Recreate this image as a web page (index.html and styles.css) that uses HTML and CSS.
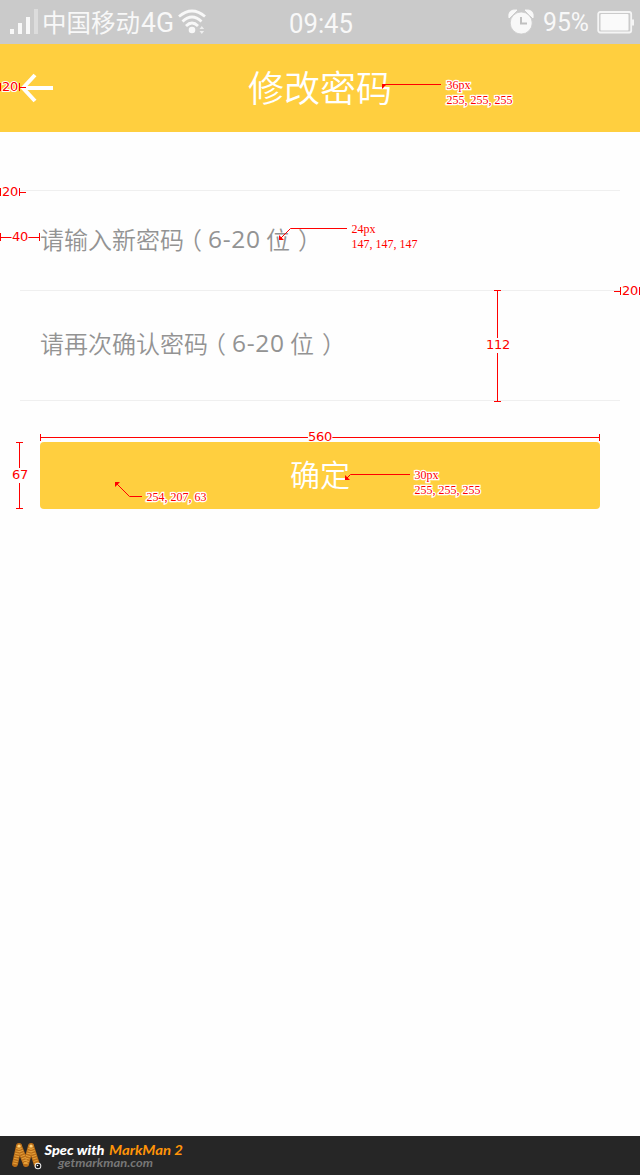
FILE: index.html
```html
<!DOCTYPE html>
<html lang="zh-CN">
<head>
<meta charset="utf-8">
<title>修改密码</title>
<link rel="stylesheet" href="styles.css">
</head>
<body>
<div class="screen">
  <div class="status">
    <div class="carrier">
      <svg class="signal" width="31" height="26" viewBox="0 0 31 26"><path d="M1 20h4v5H1zM9 14h4v11H9zM17 8h4v17h-4z" fill="#f8f8f8"/><path d="M25 0h4v25h-4z" fill="#dcdcdc"/></svg>
      <span class="operator">中国移动</span>
      <svg class="net" width="35" height="36" viewBox="0 0 35 36"><text x="0" y="28" textLength="33" lengthAdjust="spacingAndGlyphs">4G</text></svg>
      <svg class="wifi" width="28" height="26" viewBox="0 0 28 26"><g fill="none" stroke="#f8f8f8" stroke-width="2.8"><path d="M1 7.500Q14-3.500 27 7.500"/><path d="M4.500 12.500Q14 3.500 23.500 12.500"/><path d="M8 17Q14 11 20 17"/></g><circle cx="14" cy="21" r="3.300" fill="#f8f8f8"/><path d="M21.500 20l2.300-3 2.300 3zm0 2l2.300 3 2.300-3z" fill="#eee"/></svg>
    </div>
    <svg class="clock" width="66" height="38" viewBox="0 0 66 38"><text x="0" y="28" textLength="64" lengthAdjust="spacingAndGlyphs">09:45</text></svg>
    <div class="power">
      <svg class="alarm" width="26" height="26" viewBox="0 0 26 26"><path d="M1 9Q-.5 0 9 1zM25 9Q26.500 0 17 1z" fill="#f8f8f8" stroke="#f8f8f8" stroke-linejoin="round"/><circle cx="13.200" cy="14" r="11" fill="#f8f8f8" stroke="#cacaca" stroke-width=".8"/><path d="M13 8v6.500h6" fill="none" stroke="#c0c0c0" stroke-width="2"/></svg>
      <svg class="percent" width="48" height="36" viewBox="0 0 48 36"><text x="0" y="27" textLength="46" lengthAdjust="spacingAndGlyphs">95%</text></svg>
      <svg class="battery" width="37" height="24" viewBox="0 0 37 24"><rect x="1.200" y="2" width="33" height="20.500" rx="2" fill="#cbcbcb" stroke="#f5f5f5" stroke-width="1.800"/><rect x="3.500" y="4" width="28" height="16.500" rx="1" fill="#fafafa"/><path d="M35 9.500h2v6h-2z" fill="#f5f5f5"/></svg>
    </div>
  </div>
  <header class="navbar">
    <svg class="back" width="33" height="30" viewBox="0 0 33 30"><path d="M15 2L3 15l12 13M3 15h30" fill="none" stroke="#fff" stroke-width="4"/></svg>
    <h1 class="title">修改密码</h1>
  </header>
  <main class="form">
    <div class="field first">请输入新密码<span class="open">（</span><span class="range">6-20</span><span class="unit">位</span><span class="close">）</span></div>
    <div class="field second">请再次确认密码<span class="open">（</span><span class="range">6-20</span><span class="unit">位</span><span class="close">）</span></div>
    <button class="submit">确定</button>
  </main>
  <footer class="credit">
    <svg class="logo" width="32" height="28" viewBox="0 0 32 28"><g fill="none" stroke-linecap="round" stroke-width="6"><path d="M8 4L4 22M8 4l7 18M20 4l-5 18M20 4l6 19" stroke="#b96d18"/><path d="M8 4L4 22M8 4l7 18M20 4l-5 18M20 4l6 19" stroke="#e5a13a" stroke-width="4.500" stroke-dasharray="1 1.500" stroke-linecap="butt"/></g><circle cx="8" cy="4" r="1.500" fill="#ffd37a"/><circle cx="20" cy="4" r="1.500" fill="#ffd37a"/><circle cx="27" cy="24" r="3.300" fill="#eee"/><circle cx="27" cy="24" r="2.300" fill="#111"/><circle cx="26.500" cy="23.500" r=".8" fill="#fff"/></svg>
    <div class="brand">
      <svg width="150" height="36" viewBox="0 0 150 36"><text class="spec" x="1.500" y="18.500" textLength="60" lengthAdjust="spacingAndGlyphs">Spec with</text><text class="spec product" x="66" y="18.500" textLength="74" lengthAdjust="spacingAndGlyphs">MarkMan 2</text><text class="site" x="15" y="30.500" textLength="95" lengthAdjust="spacingAndGlyphs">getmarkman.com</text></svg>
    </div>
  </footer>
  <svg class="marks" width="640" height="1175" viewBox="0 0 640 1175">
    <g class="rules">
      <path d="M.5 83v8M19.500 83v8M19 87.500h7"/>
      <path d="M.5 188v8M19.500 188v8M19 192.500h7"/>
      <path d="M.5 233v8M0 237.500h12M28 237.500h12M39.500 233v8"/>
      <path d="M614 291.500h6M620.500 287v8M639.500 287v8"/>
      <path d="M494 290.500h7M497.500 290v48M497.500 353v48M494 401.500h7"/>
      <path d="M40.500 434v7M40 437.500h268M332 437.500h267M599.500 434v7"/>
      <path d="M16 442.500h7M19.500 442v26M19.500 483v25M16 508.500h7"/>
      <path d="M384 84.500h57M281 238l9.500-9.500H347M347 478l3.500-3.500H410M117 484l12.500 12.500H142"/>
    </g>
    <path class="tips" d="M382 84h5l-5 5zM279 235v5h5zM345 475v5h5zM115 482h5l-5 5z"/>
    <g class="sizes">
      <text x="10" y="91">20</text><text x="10" y="196">20</text><text x="20" y="241">40</text>
      <text x="630" y="295">20</text><text x="498" y="349">112</text><text x="320" y="441">560</text><text x="20" y="479">67</text>
    </g>
    <g class="notes">
      <text x="446.5" y="89">36px</text><text x="446.5" y="104">255, 255, 255</text>
      <text x="351.5" y="233">24px</text><text x="351.5" y="248">147, 147, 147</text>
      <text x="414.5" y="479">30px</text><text x="414.5" y="494">255, 255, 255</text>
      <text x="146.5" y="501">254, 207, 63</text>
    </g>
  </svg>
</div>
</body>
</html>
```
FILE: styles.css
```css
* { box-sizing: border-box; }
body { margin: 0; font-family: "Noto Sans CJK SC", sans-serif; }
.screen { position: relative; width: 640px; height: 1175px; display: flex; flex-direction: column; background: #fefefe; overflow: hidden; }
.status { display: grid; grid-template-columns: 1fr auto 1fr; align-items: start; height: 44px; padding: 0 6px 0 9px; background: #cacaca; color: #f8f8f8; fill: #f8f8f8; white-space: nowrap; }
.carrier, .power { display: flex; align-items: center; height: 43px; }
.operator { margin-left: 2px; font-size: 24.5px; font-weight: 400; line-height: 43px; }
.net { margin: 0 2px 0 1px; font: 400 28px Roboto, sans-serif; }
.clock { margin-top: 5px; font: 400 28px Roboto, sans-serif; }
.power { justify-content: flex-end; }
.percent { margin: 0 6px 0 9px; font: 400 26px Roboto, sans-serif; }
.navbar { display: grid; grid-template-columns: 33px 1fr 33px; align-items: center; height: 88px; padding: 0 20px; background: #ffcf3f; }
.title { margin: 0; font-size: 36px; font-weight: 350; line-height: 84px; height: 88px; text-align: center; color: #fff; }
.form { display: flex; flex-direction: column; padding: 58px 20px 0; }
.field { display: flex; padding-left: 20px; border-top: 1px solid #efefef; font-size: 24px; font-weight: 350; color: #939393; white-space: nowrap; }
.first { height: 100px; line-height: 95px; }
.second { height: 111px; line-height: 103px; border-bottom: 1px solid #efefef; }
.open, .close { width: 12px; font-feature-settings: "halt"; }
.open { margin: 0 6px 0 6px; }
.close { margin-left: 8px; }
.range { width: 58px; font-family: "Open Sans", sans-serif; font-size: 24.5px; font-weight: 400; letter-spacing: 0.7px; }
.submit { margin: 41px 20px 0; height: 67px; padding: 0 0 4px; border: 0; border-radius: 4px; background: #ffcf3f; color: #fff; font: 350 30px/63px "Noto Sans CJK SC", sans-serif; }
.credit { display: flex; align-items: center; height: 39px; margin-top: auto; padding-left: 11px; background: #262626; }
.brand { display: flex; height: 36px; margin-bottom: 3px; }
.spec { font: italic 900 13px Lato, sans-serif; fill: #fff; }
.product { font-weight: 700; fill: #ff9408; }
.site { font: italic 700 11px Lato, sans-serif; fill: #777; }
.marks { position: absolute; inset: 0; pointer-events: none; }
.rules { fill: none; stroke: #f00; stroke-width: 1; }
.tips { fill: #f00; }
.sizes { font: 13px "DejaVu Sans", sans-serif; letter-spacing: -0.3px; fill: #f00; stroke: #fefefe; stroke-width: 2px; paint-order: stroke; text-anchor: middle; }
.notes { font: 12px "Liberation Serif", serif; fill: #f00; stroke: #fff; stroke-width: 2.5px; paint-order: stroke; }
```
